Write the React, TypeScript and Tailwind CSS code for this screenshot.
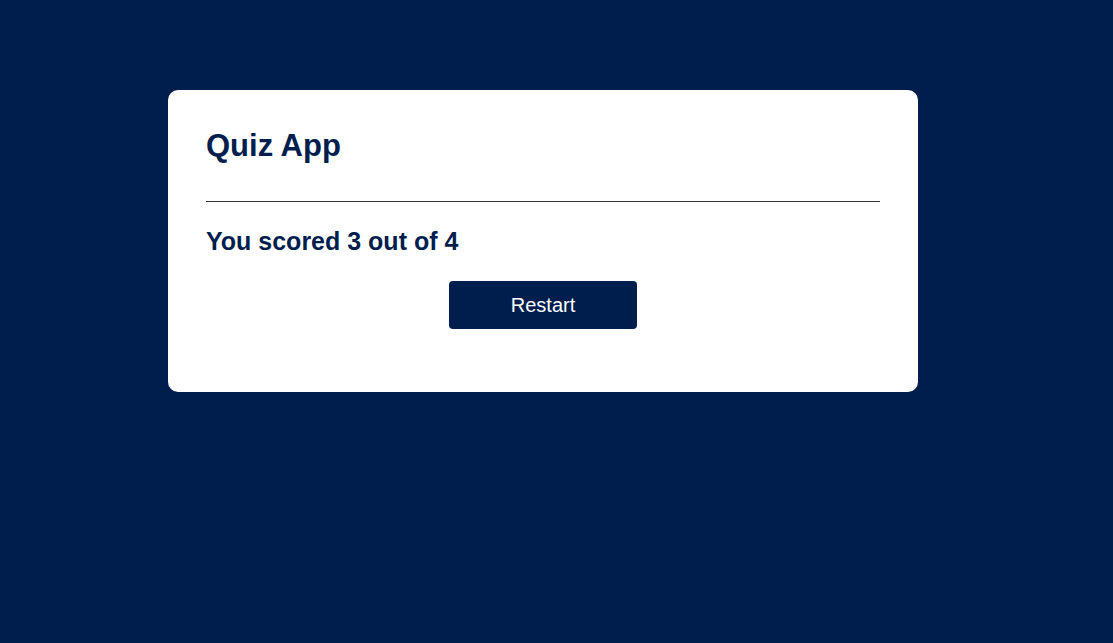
export default function App() {
  return (
    <div className="min-h-screen w-full bg-[#001e4d] pt-[90px] font-['Liberation_Sans',Arial,sans-serif]">
      <div className="ml-[168px] w-[750px] rounded-[10px] bg-white px-[38px] pt-[38px] pb-[63px]">
        <h1 className="border-b border-[#333] pb-[37px] text-[31px] font-bold leading-[36px] text-[#001e4d]">
          Quiz App
        </h1>
        <h2 className="mt-[24px] text-[25px] font-bold leading-[30px] text-[#001e4d]">
          You scored 3 out of 4
        </h2>
        <div className="mt-[25px] flex justify-center">
          <button className="h-[48px] w-[188px] rounded-[4px] bg-[#001e4d] text-[20px] text-white">
            Restart
          </button>
        </div>
      </div>
    </div>
  );
}
